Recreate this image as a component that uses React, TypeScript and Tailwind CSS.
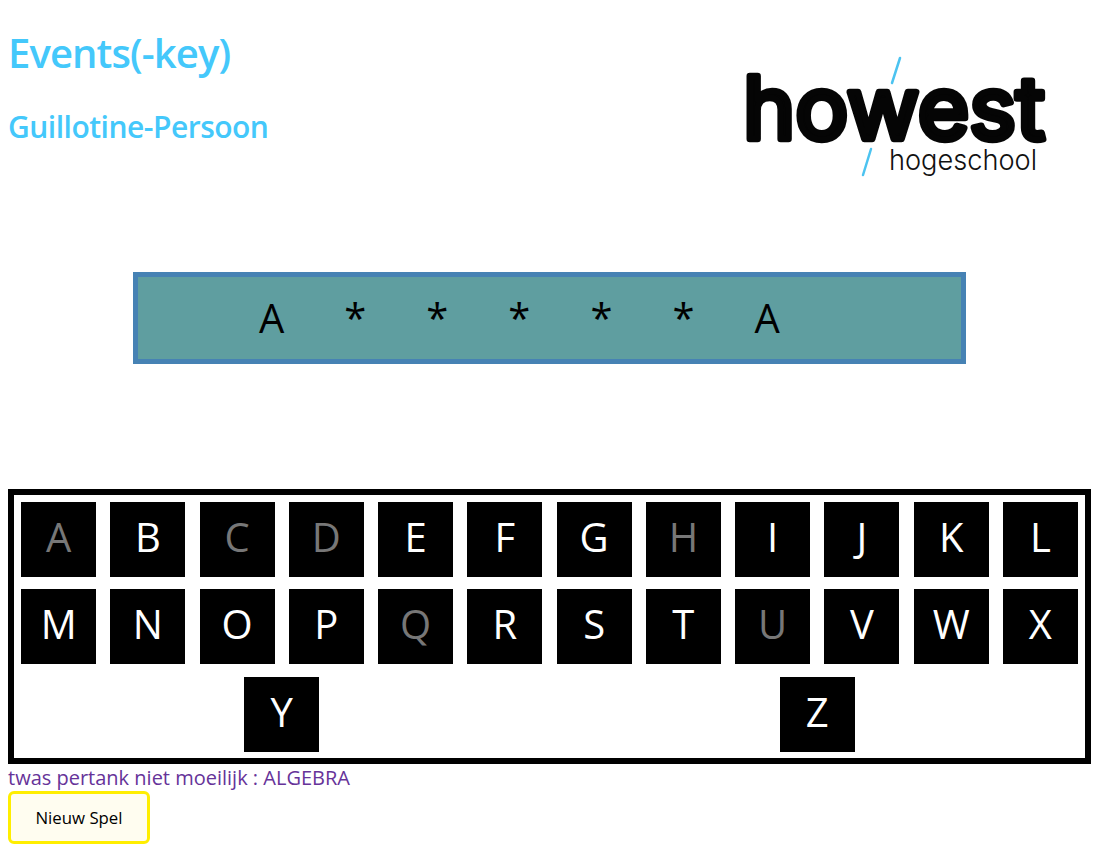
const used = "ACDHQU";
const rows = "ABCDEFGHIJKLMNOPQRSTUVWXYZ".split("");
const word = ["A", "*", "*", "*", "*", "*", "A"];

function Logo() {
  return (
    <svg width="330" height="140" viewBox="0 0 330 140" className="block">
      <line x1="170" y1="13" x2="162" y2="38" stroke="#4cc3f0" strokeWidth="2.5" strokeLinecap="round" />
      <line x1="141" y1="104" x2="133" y2="130" stroke="#4cc3f0" strokeWidth="2.5" strokeLinecap="round" />
      <text x="13" y="94" fontFamily="Inter, sans-serif" fontWeight="400" fontSize="87" textLength="302" lengthAdjust="spacingAndGlyphs" fill="#050505" stroke="#050505" strokeWidth="6.5" strokeLinejoin="round" strokeLinecap="round">howest</text>
      <text x="159" y="125" fontFamily="Inter, sans-serif" fontWeight="300" fontSize="28" textLength="148" lengthAdjust="spacingAndGlyphs" fill="#111">hogeschool</text>
    </svg>
  );
}

export default function App() {
  return (
    <div className="p-2 bg-white text-black font-['Open_Sans',sans-serif]">
      <div className="flex justify-between h-[232px]">
        <div>
          <h1 className="text-[40px] leading-[54px] font-semibold text-[#44c8fb] mt-[18px] tracking-[-0.9px]">Events(-key)</h1>
          <h2 className="text-[30px] leading-[41px] font-semibold text-[#44c8fb] mt-[26px] tracking-[-0.5px]">Guillotine-Persoon</h2>
        </div>
        <div className="mr-[30px] mt-[37px]"><Logo /></div>
      </div>
      <div className="mt-[32px] ml-[125px] h-[92px] border-[5px] border-[#4682b4] bg-[#5f9ea0] flex items-center pl-[91px] w-[833px]">
        {word.map((c, i) => (
          <span key={i} className="mx-[30px] text-[40px]">{c}</span>
        ))}
      </div>
      <div className="mt-[125.3px] w-[1083px] h-[275px] border-[6px] border-black flex flex-wrap justify-around content-around">
        {rows.map((c) => (
          <div key={c} className={`m-[5px] w-[75px] h-[75px] pb-[5px] bg-black flex items-center justify-center text-[40px] ${used.includes(c) ? "text-[#777777]" : "text-white"}`}>{c}</div>
        ))}
      </div>
      <p className="text-[20px] leading-[27px] text-[#663399]">twas pertank niet moeilijk : ALGEBRA</p>
      <button className="w-[142px] h-[53px] border-[3px] border-[#ffee00] rounded-[6px] bg-[#fffdf0] text-[16.8px] text-black">Nieuw Spel</button>
    </div>
  );
}
